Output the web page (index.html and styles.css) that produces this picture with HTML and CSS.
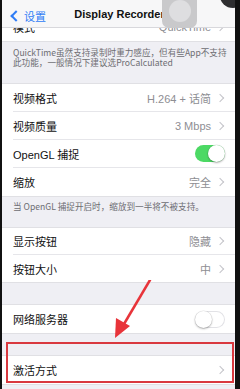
FILE: index.html
```html
<!DOCTYPE html>
<html lang="zh-CN">
  <head>
    <meta charset="UTF-8" />
    <meta name="viewport" content="width=device-width, initial-scale=1.0" />
    <title>Display Recorder</title>
    <link rel="stylesheet" href="styles.css">
  </head>
  <body>
    <div class="screen">
      <div class="navbar">
        <div class="back"><span class="back-arrow"></span>设置</div>
        <div class="title">Display Recorder</div>
      </div>

      <div class="content">
        <!-- first row scrolled half under the nav bar -->
        <div class="group first">
          <div class="row"><span class="label">模式</span><span class="value">QuickTime</span><span class="chev"></span></div>
        </div>
        <p class="note">QuickTime虽然支持录制时重力感应，但有些App不支持此功能，一般情况下建议选ProCalculated</p>

        <div class="group">
          <div class="row"><span class="label">视频格式</span><span class="value">H.264 + 话简</span><span class="chev"></span></div>
          <div class="row"><span class="label">视频质量</span><span class="value">3 Mbps</span><span class="chev"></span></div>
          <div class="row"><span class="label">OpenGL 捕捉</span><span class="switch on"></span></div>
          <div class="row"><span class="label">缩放</span><span class="value">完全</span><span class="chev"></span></div>
        </div>
        <p class="note single">当 OpenGL 捕捉开启时，缩放到一半将不被支持。</p>

        <div class="group short">
          <div class="row"><span class="label">显示按钮</span><span class="value">隐藏</span><span class="chev"></span></div>
          <div class="row"><span class="label">按钮大小</span><span class="value">中</span><span class="chev"></span></div>
        </div>

        <div class="gap"></div>
        <div class="group">
          <div class="row"><span class="label">网络服务器</span><span class="switch"></span></div>
        </div>

        <div class="gap"></div>
        <div class="group">
          <div class="row"><span class="label">激活方式</span><span class="value"></span><span class="chev"></span></div>
        </div>
      </div>

      <!-- overlays: assistive touch button, camera, annotation -->
      <div class="assist"><span></span></div>
      <div class="cam"></div>
      <div class="highlight"></div>
      <svg class="arrow" width="60" height="80" viewBox="0 0 60 80">
        <line x1="49" y1="0" x2="23" y2="44" stroke="#e8343a" stroke-width="2.5" stroke-linecap="round" />
        <polygon points="14,58 15,38 29,46" fill="#e8343a" />
      </svg>
    </div>
  </body>
</html>
```

FILE: styles.css
```css
body {
  margin: 0;
  font-family: "Liberation Sans", "Noto Sans CJK SC", sans-serif;
  background: #111;
}
.screen {
  position: relative;
  width: 233px;
  height: 389px;
  margin-left: 2px;
  background: #efeff4;
  overflow: hidden;
}
.navbar {
  position: relative;
  z-index: 2;
  height: 28px;
  background: #f7f7f8;
  border-bottom: 1px solid #d8d8dc;
  box-sizing: border-box;
  display: flex;
  align-items: center;
  justify-content: center;
}
.back {
  position: absolute;
  left: 6px;
  top: 8px;
  display: flex;
  align-items: center;
  color: #2f7cf6;
  font-size: 11px;
}
.back-arrow {
  width: 6px;
  height: 6px;
  border-left: 2px solid #2f7cf6;
  border-bottom: 2px solid #2f7cf6;
  transform: rotate(45deg);
  margin: 0 4px 0 4px;
}
.title {
  font-size: 11px;
  font-weight: bold;
  color: #111;
  margin-left: 2px;
}
.content {
  font-size: 11px;
}
.group {
  background: #fff;
  border-top: 1px solid #e0e0e4;
  border-bottom: 1px solid #e0e0e4;
}
.group.first {
  margin-top: -15px;
  border-top: none;
}
.row {
  display: flex;
  align-items: center;
  height: 28px;
  margin-left: 11px;
  padding-right: 10px;
  border-bottom: 1px solid #e6e6ea;
  box-sizing: border-box;
  color: #111;
}
.row:last-child {
  border-bottom: none;
}
.group.short .row {
  height: 27px;
}
.label {
  flex: 1;
}
.value {
  color: #8e8e93;
  margin-right: 6px;
}
.chev {
  width: 5px;
  height: 5px;
  border-top: 1px solid #c4c4c9;
  border-right: 1px solid #c4c4c9;
  transform: rotate(45deg);
  margin-right: 2px;
}
.switch {
  position: relative;
  width: 30px;
  height: 17px;
  border-radius: 9px;
  background: #fff;
  box-shadow: inset 0 0 0 1px #e2e2e6;
  box-sizing: border-box;
}
.switch::after {
  content: "";
  position: absolute;
  left: 0;
  top: 0;
  width: 17px;
  height: 17px;
  border-radius: 50%;
  background: #fff;
  box-shadow: 0 1px 2px rgba(0, 0, 0, 0.3), 0 0 0 0.5px rgba(0, 0, 0, 0.1);
}
.switch.on {
  background: #4cd964;
  box-shadow: none;
}
.switch.on::after {
  left: 13px;
}
.note {
  margin: 0;
  padding: 5px 8px 10px 11px;
  height: 41px;
  box-sizing: border-box;
  font-family: "Noto Sans CJK SC", sans-serif;
  font-size: 8.6px;
  line-height: 10px;
  color: #6d6d72;
}
.note.single {
  height: 30px;
  padding-top: 4px;
}
.gap {
  height: 21px;
}
.assist {
  position: absolute;
  z-index: 3;
  left: 160px;
  top: -6px;
  width: 35px;
  height: 34px;
  border-radius: 7px;
  background: #c9c9cb;
  display: flex;
  align-items: center;
  justify-content: center;
}
.assist span {
  width: 22px;
  height: 22px;
  border-radius: 50%;
  background: #dedee0;
}
.cam {
  position: absolute;
  z-index: 3;
  left: 218px;
  top: -16px;
  width: 26px;
  height: 24px;
  border-radius: 50%;
  background: #2e2e30;
}
.highlight {
  position: absolute;
  left: 4px;
  top: 342px;
  width: 228px;
  height: 41px;
  border: 2px solid #d9393f;
  box-sizing: border-box;
}
.arrow {
  position: absolute;
  left: 99px;
  top: 280px;
}
```
